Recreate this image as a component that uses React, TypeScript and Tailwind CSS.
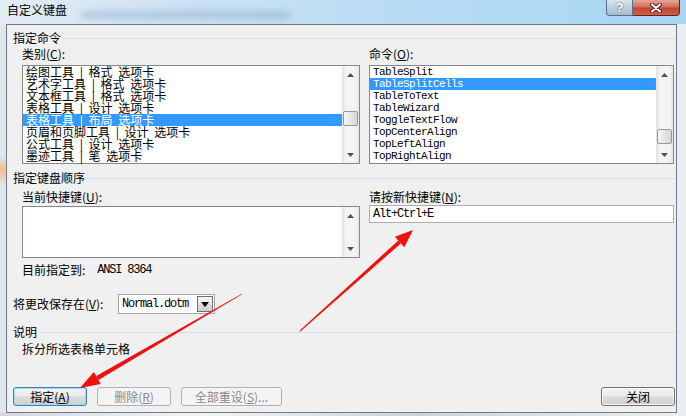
import React from "react";

const mono = "font-['Liberation_Mono',monospace] text-[12px] tracking-[-1.2px]";
const monoList = "font-['Liberation_Mono',monospace] text-[11px] tracking-[-0.6px]";

const categories = [
  "绘图工具 | 格式 选项卡",
  "艺术字工具 | 格式 选项卡",
  "文本框工具 | 格式 选项卡",
  "表格工具 | 设计 选项卡",
  "表格工具 | 布局 选项卡",
  "页眉和页脚工具 | 设计 选项卡",
  "公式工具 | 设计 选项卡",
  "墨迹工具 | 笔 选项卡",
];

const commands = [
  "TableSplit",
  "TableSplitCells",
  "TableToText",
  "TableWizard",
  "ToggleTextFlow",
  "TopCenterAlign",
  "TopLeftAlign",
  "TopRightAlign",
];

function Arrow({ dir }: { dir: "up" | "down" }) {
  return (
    <svg width="7" height="4" viewBox="0 0 7 4" className="block">
      <path d={dir === "up" ? "M0 4 L3.5 0 L7 4 Z" : "M0 0 L7 0 L3.5 4 Z"} fill="#505050" />
    </svg>
  );
}

function ScrollBar({ thumb }: { thumb?: string }) {
  return (
    <div className="flex w-[17px] flex-col bg-[linear-gradient(90deg,#e2e2e2,#f4f4f4_25%,#f4f4f4_75%,#e6e6e6)]">
      <div className="flex h-[17px] items-center justify-center">
        <Arrow dir="up" />
      </div>
      <div className="flex-1">
        {thumb && (
          <div
            className={`mx-[1px] h-[15px] rounded-[2px] border border-[#979797] bg-[linear-gradient(90deg,#f6f6f6,#e6e6e6_50%,#d6d6d6)] ${thumb}`}
          />
        )}
      </div>
      <div className="flex h-[17px] items-center justify-center">
        <Arrow dir="down" />
      </div>
    </div>
  );
}

function GroupHeader({ title, className }: { title: string; className: string }) {
  return (
    <div className={`flex h-[12px] items-center ${className}`}>
      <span>{title}</span>
      <div className="ml-[2px] h-px flex-1 bg-[#d5dfe5]" />
    </div>
  );
}

function Btn({
  children,
  w,
  disabled,
  primary,
}: {
  children: React.ReactNode;
  w: string;
  disabled?: boolean;
  primary?: boolean;
}) {
  const look = disabled
    ? "border-[#adb2b5] bg-[#f4f4f4] text-[#8a8a8a]"
    : primary
    ? "border-[#3c7fb1] shadow-[inset_0_0_0_1px_#9fdcf6] bg-[linear-gradient(#f2f2f2,#ebebeb_50%,#dddddd_50%,#cfcfcf)]"
    : "border-[#707070] shadow-[inset_0_0_0_1px_#fcfcfc] bg-[linear-gradient(#f2f2f2,#ebebeb_50%,#dddddd_50%,#cfcfcf)]";
  return (
    <div className={`flex h-[19px] items-center justify-center rounded-[3px] border ${w} ${look}`}>
      {children}
    </div>
  );
}

export default function App() {
  return (
    <div className="relative h-[416px] w-[686px] overflow-hidden bg-[#e3e6e9] font-['Noto_Sans_CJK_SC',sans-serif] text-[12px] leading-[12px] text-black">
      {/* title bar */}
      <div className="flex h-[24px] bg-[linear-gradient(90deg,#e3ecf5,#cde2f3_25%,#b7dbf4_60%,#a8d6f4)]">
        <div className="pl-[7px] pt-[4px]">自定义键盘</div>
        <div className="ml-[14px] mt-[11px] h-[8px] w-[210px] rounded bg-[#7e9fbf] opacity-40 blur-[3px]" />
        <div className="ml-auto mr-[6px] flex h-[16px]">
          <div className="flex w-[27px] items-center justify-center rounded-bl-[4px] border border-t-0 border-[#5c7184] bg-[linear-gradient(#d9e5ef,#bccfdf_50%,#a5bdd2)] font-['Liberation_Sans',sans-serif] text-[13px] font-bold text-white [text-shadow:0_0_2px_#2d3f50]">
            ?
          </div>
          <div className="flex w-[47px] items-center justify-center rounded-br-[4px] border border-t-0 border-l-0 border-[#5a2620] bg-[linear-gradient(#e8a598,#d2705f_45%,#c24534_55%,#d45e47)]">
            <svg width="12" height="10" viewBox="0 0 12 10">
              <path d="M2 1.5 L10 8.5 M10 1.5 L2 8.5" stroke="#4a1a14" strokeWidth="4" strokeLinecap="round" />
              <path d="M2 1.5 L10 8.5 M10 1.5 L2 8.5" stroke="#ffffff" strokeWidth="2.2" strokeLinecap="round" />
            </svg>
          </div>
        </div>
      </div>

      <div className="flex h-[389px]">
        <div className="flex w-[6px] flex-col bg-[#dfe7ee]">
          <div className="h-[131px]" />
          <div className="h-[30px] bg-[linear-gradient(transparent,#efbf8a_50%,transparent)]" />
        </div>

        {/* client area */}
        <div className="flex w-[671px] flex-col border border-[#6d7a87] bg-[#f0f0f0] pl-[6px] pr-[1px]">
          <GroupHeader title="指定命令" className="mt-[7px]" />
          <div className="mt-[4px] flex pl-[9px]">
            <div className="w-[338px]">
              类别(<u className="underline-offset-[1px]">C</u>):
            </div>
            <div className="ml-[9px]">
              命令(<u className="underline-offset-[1px]">O</u>):
            </div>
          </div>
          <div className="mt-[5px] flex pl-[9px]">
            <div className="flex h-[99px] w-[338px] border border-[#828790] bg-white">
              <div className="flex-1">
                {categories.map((c, i) => (
                  <div
                    key={c}
                    className={`h-[12px] whitespace-pre pl-[3px] leading-[12px] [word-spacing:3px] ${
                      i === 4 ? "bg-[#3399ff] text-white" : ""
                    }`}
                  >
                    {c}
                  </div>
                ))}
              </div>
              <ScrollBar thumb="mt-[28px]" />
            </div>
            <div className="ml-[9px] flex h-[99px] w-[305px] border border-[#828790] bg-white">
              <div className="flex-1">
                {commands.map((c, i) => (
                  <div
                    key={c}
                    className={`h-[12px] pl-[3px] leading-[12px] ${monoList} ${
                      i === 1 ? "bg-[#3399ff] text-white" : ""
                    }`}
                  >
                    {c}
                  </div>
                ))}
              </div>
              <ScrollBar thumb="mt-[46px]" />
            </div>
          </div>

          <GroupHeader title="指定键盘顺序" className="mt-[8px]" />
          <div className="mt-[7px] flex pl-[9px]">
            <div className="flex w-[338px] flex-col">
              <div>
                当前快捷键(<u className="underline-offset-[1px]">U</u>):
              </div>
              <div className="mt-[3px] flex h-[52px] border border-[#828790] bg-white">
                <div className="flex-1" />
                <ScrollBar />
              </div>
              <div className="mt-[6px] flex h-[12px] items-center">
                <span>目前指定到:</span>
                <span className={`ml-[12px] ${mono}`}>ANSI 8364</span>
              </div>
            </div>
            <div className="ml-[9px] flex w-[305px] flex-col">
              <div>
                请按新快捷键(<u className="underline-offset-[1px]">N</u>):
              </div>
              <div className={`mt-[2px] flex h-[18px] items-center border border-[#abadb3] bg-white pl-[3px] ${mono}`}>
                Alt+Ctrl+E
              </div>
            </div>
          </div>

          <div className="mt-[18px] flex h-[20px] items-center">
            <div className="w-[105px]">
              将更改保存在(<u className="underline-offset-[1px]">V</u>):
            </div>
            <div className="flex h-[20px] w-[97px] items-center border border-[#a5a5a5] bg-white">
              <span className={`pl-[3px] ${mono}`}>Normal.dotm</span>
              <div className="ml-auto mr-[1px] flex h-[16px] w-[16px] items-center justify-center border border-[#707070] bg-[linear-gradient(#f2f2f2,#ebebeb_50%,#dddddd_50%,#cfcfcf)]">
                <svg width="8" height="5" viewBox="0 0 8 5">
                  <path d="M0 0 L8 0 L4 5 Z" fill="#000" />
                </svg>
              </div>
            </div>
          </div>

          <GroupHeader title="说明" className="mt-[12px]" />
          <div className="mt-[5px] pl-[9px]">拆分所选表格单元格</div>

          <div className="mt-[32px] flex">
            <Btn w="w-[74px]" primary>
              指定(<u className="underline-offset-[1px]">A</u>)
            </Btn>
            <div className="ml-[10px]">
              <Btn w="w-[74px]" disabled>
                删除(<u className="underline-offset-[1px]">R</u>)
              </Btn>
            </div>
            <div className="ml-[10px]">
              <Btn w="w-[101px]" disabled>
                全部重设(<u className="underline-offset-[1px]">S</u>)...
              </Btn>
            </div>
            <div className="ml-auto">
              <Btn w="w-[74px]">关闭</Btn>
            </div>
          </div>
        </div>

        <div className="flex-1 bg-[#e9eef2]" />
      </div>
      <div className="h-[3px] bg-[linear-gradient(90deg,#d4d7da,#f4f4f4_30%,#cfd2d5_60%,#eeeeee)]" />

      {/* red annotation arrows */}
      <svg className="pointer-events-none absolute left-0 top-0" width="686" height="416" viewBox="0 0 686 416">
        <polygon points="300.3,331.4 299.7,330.6 398.3,240.5 400.9,243.5" fill="#f01010" />
        <polygon points="413,230 404.3,247.2 394.9,236.8" fill="#f01010" />
        <polygon points="242.15,294.26 241.85,293.74 96.2,376.1 98.4,379.9" fill="#f01010" />
        <polygon points="80,388 100.8,384.1 93.8,371.9" fill="#f01010" />
      </svg>
    </div>
  );
}
